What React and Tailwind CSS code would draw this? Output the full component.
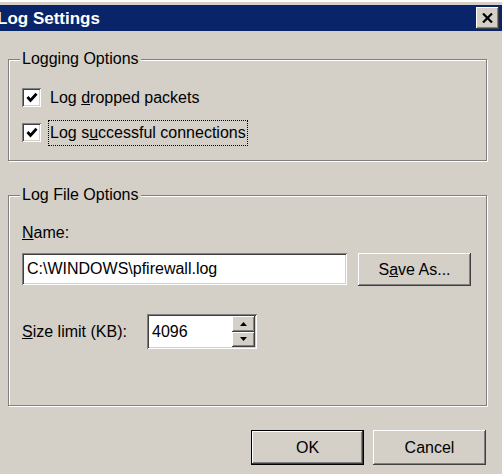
import React from "react";

// classic win2k bevels
const raised =
  "bg-[#d4d0c8] shadow-[inset_-1px_-1px_0_#404040,inset_1px_1px_0_#ffffff,inset_-2px_-2px_0_#808080,inset_2px_2px_0_#d4d0c8]";
const sunken =
  "bg-white shadow-[inset_1px_1px_0_#808080,inset_-1px_-1px_0_#ffffff,inset_2px_2px_0_#404040,inset_-2px_-2px_0_#d4d0c8]";

const GroupBox = ({ title, className, children }) => (
  <div
    className={`relative border border-[#808080] shadow-[inset_1px_1px_0_#ffffff,1px_1px_0_#ffffff] ${className}`}
  >
    <span className="absolute -top-[11px] left-[11px] px-[2px] bg-[#d4d0c8] leading-[20px]">
      {title}
    </span>
    {children}
  </div>
);

const CheckBox = () => (
  <div className={`w-[19px] h-[19px] flex items-center justify-center shrink-0 ${sunken}`}>
    <svg width="12" height="11" viewBox="0 0 12 11">
      <path d="M1.5 5 L4.5 8.5 L10.5 1.8" fill="none" stroke="#000" strokeWidth="2.8" />
    </svg>
  </div>
);

const Button = ({ children, isDefault }) => (
  <button
    className={`h-[35px] w-[113px] flex items-center justify-center text-[16px] text-black ${raised} ${
      isDefault ? "border border-black" : ""
    }`}
  >
    {children}
  </button>
);

export default function App() {
  return (
    <div
      className="w-[502px] h-[474px] bg-[#d4d0c8] overflow-hidden text-black text-[16px]"
      style={{ fontFamily: '"Liberation Sans", Arial, sans-serif' }}
    >
      <div className="h-[5px] border-t-2 border-white" />
      <div className="h-[26px] bg-[#0a246a] flex items-center justify-between pr-[3px]">
        <span className="text-white font-bold text-[17px] -ml-[3px] leading-none">Log Settings</span>
        <div className={`w-[23px] h-[22px] flex items-center justify-center ${raised}`}>
          <svg width="11" height="10" viewBox="0 0 11 10">
            <path d="M1 0.5 L10 9.5 M10 0.5 L1 9.5" stroke="#000" strokeWidth="2.2" />
          </svg>
        </div>
      </div>

      <div className="pl-[8px] pt-[28px]">
        <GroupBox title="Logging Options" className="w-[479px] h-[102px] pt-[28px] pl-[13px]">
          <div className="flex items-center h-[19px]">
            <CheckBox />
            <span className="ml-[7px] px-[1px] border border-transparent leading-[22px]">
              Log <u>d</u>ropped packets
            </span>
          </div>
          <div className="flex items-center h-[19px] mt-[16px]">
            <CheckBox />
            <span className="ml-[7px] px-[1px] w-[200px] h-[26px] flex items-center border border-dotted border-black">
              Log s<u>u</u>ccessful connections
            </span>
          </div>
        </GroupBox>

        <GroupBox title="Log File Options" className="w-[479px] h-[211px] mt-[34px] pt-[28px] pl-[13px]">
          <div className="leading-[18px]">
            <u>N</u>ame:
          </div>
          <div className="flex items-start mt-[11px]">
            <div className={`w-[325px] h-[32px] flex items-center pl-[5px] ${sunken}`}>
              C:\WINDOWS\pfirewall.log
            </div>
            <div className="ml-[11px]">
              <button
                className={`h-[33px] w-[113px] flex items-center justify-center text-[16px] ${raised}`}
              >
                S<u>a</u>ve As...
              </button>
            </div>
          </div>
          <div className="flex items-center mt-[28px]">
            <span className="w-[125px]">
              <u>S</u>ize limit (KB):
            </span>
            <div className={`w-[110px] h-[35px] flex items-stretch ${sunken} p-[2px]`}>
              <div className="flex-1 flex items-center pl-[3px]">4096</div>
              <div className="w-[23px] flex flex-col">
                <div className={`flex-1 flex items-center justify-center ${raised}`}>
                  <svg width="7" height="4" viewBox="0 0 7 4">
                    <path d="M3.5 0 L7 4 L0 4 Z" fill="#000" />
                  </svg>
                </div>
                <div className={`flex-1 flex items-center justify-center ${raised}`}>
                  <svg width="7" height="4" viewBox="0 0 7 4">
                    <path d="M0 0 L7 0 L3.5 4 Z" fill="#000" />
                  </svg>
                </div>
              </div>
            </div>
          </div>
        </GroupBox>

        <div className="w-[478px] flex justify-end gap-[9px] mt-[24px]">
          <Button isDefault>OK</Button>
          <Button>Cancel</Button>
        </div>
      </div>
    </div>
  );
}
